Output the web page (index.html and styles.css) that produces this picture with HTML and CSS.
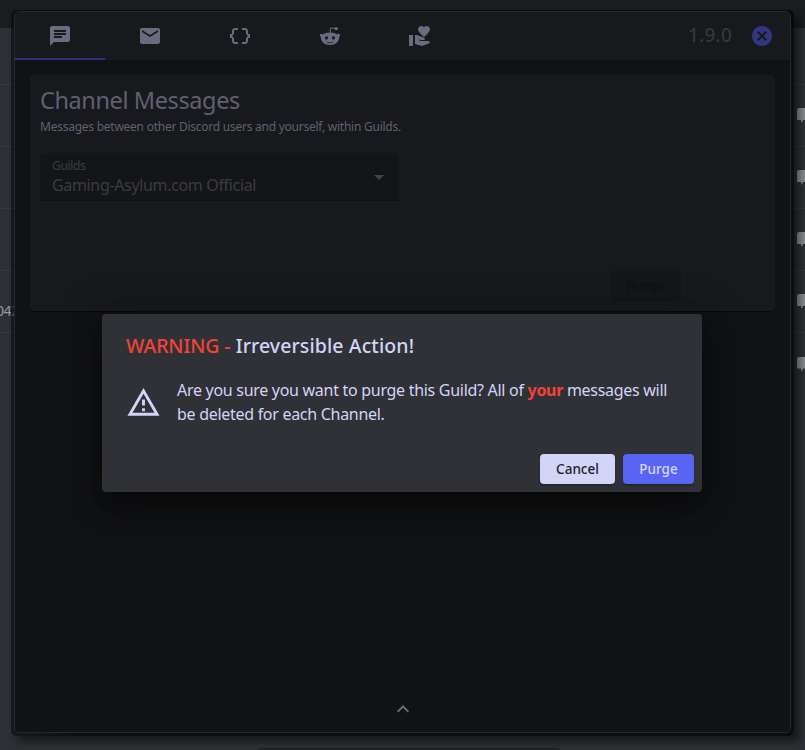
FILE: index.html
```html
<!DOCTYPE html>
<html lang="en">
<head>
<meta charset="utf-8">
<title>Channel Messages</title>
<link rel="stylesheet" href="styles.css">
</head>
<body>
<div class="backdrop">
  <div class="topbar"></div>
  <div class="rows">
    <div class="row first"></div>
    <div class="row"><span></span><i class="bubble"></i></div>
    <div class="row"><span></span><i class="bubble"></i></div>
    <div class="row"><span></span><i class="bubble"></i></div>
    <div class="row"><span>042</span><i class="bubble"></i></div>
    <div class="row last"><span></span><i class="bubble"></i></div>
  </div>
  <div class="composer"></div>
</div>
<main class="window">
  <div class="panel">
    <header class="tabs">
      <div class="tab active"><svg viewBox="0 0 24 24"><path d="M20 2H4c-1.100 0-1.990.9-1.990 2L2 22l4-4h14c1.100 0 2-.9 2-2V4c0-1.100-.9-2-2-2zM6 9h12v2H6V9zm8 5H6v-2h8v2zm4-6H6V6h12v2z"/></svg></div>
      <div class="tab"><svg viewBox="0 0 24 24"><path d="M20 4H4c-1.100 0-1.990.9-1.990 2L2 18c0 1.100.9 2 2 2h16c1.100 0 2-.9 2-2V6c0-1.100-.9-2-2-2zm0 4l-8 5-8-5V6l8 5 8-5v2z"/></svg></div>
      <div class="tab"><svg viewBox="0 0 24 24"><path d="M4 7v2c0 .55-.45 1-1 1H2v4h1c.55 0 1 .45 1 1v2c0 1.650 1.350 3 3 3h3v-2H7c-.55 0-1-.45-1-1v-2c0-1.300-.84-2.420-2-2.830v-.34C5.160 11.420 6 10.300 6 9V7c0-.55.45-1 1-1h3V4H7C5.350 4 4 5.350 4 7zM21 10c-.55 0-1-.45-1-1V7c0-1.650-1.350-3-3-3h-3v2h3c.55 0 1 .45 1 1v2c0 1.300.84 2.420 2 2.830v.34c-1.160.41-2 1.520-2 2.830v2c0 .55-.45 1-1 1h-3v2h3c1.650 0 3-1.350 3-3v-2c0-.55.45-1 1-1h1v-4h-1z"/></svg></div>
      <div class="tab"><svg viewBox="0 0 24 24"><path fill-rule="evenodd" d="M4.600 10.400C6.400 9.200 9 8.400 12 8.400s5.600.8 7.400 2c.5-.5 1-.7 1.500-.6 1.500.2 1.700 2.200.3 3.200 0 4.700-3.700 8-9.200 8s-9.200-3.300-9.200-8c-1.400-1-1.200-3 .3-3.200.5-.1 1 .1 1.500.6zM8.500 12.300a1.600 1.600 0 1 0 0 3.200 1.600 1.600 0 0 0 0-3.200zm7 0a1.600 1.600 0 1 0 0 3.200 1.600 1.600 0 0 0 0-3.200zM8 17.200c2.100 1.600 5.900 1.600 8 0-1.300 2.600-6.700 2.600-8 0z"/><path class="stroke" d="M12.300 9V4l5.200.3"/><circle cx="18.200" cy="4.600" r="1.700"/></svg></div>
      <div class="tab"><svg viewBox="0 0 24 24"><path d="M1 11h4v11H1zM16 3.250C16.650 2.490 17.660 2 18.700 2 20.550 2 22 3.450 22 5.300c0 2.270-2.910 4.900-6 7.700-3.090-2.810-6-5.440-6-7.700C10 3.450 11.450 2 13.300 2c1.040 0 2.050.49 2.700 1.250zM20 17h-7l-2.090-.73.33-.94L13 16h2.820c.65 0 1.180-.53 1.180-1.180 0-.49-.31-.93-.77-1.110L8.970 11H7v9.020L14 22l8.010-3c-.01-1.100-.9-2-2.010-2z"/></svg></div>
      <span class="version">1.9.0</span>
      <svg class="close" viewBox="0 0 24 24"><path d="M12 2C6.470 2 2 6.470 2 12s4.470 10 10 10 10-4.470 10-10S17.530 2 12 2zm5 13.590L15.590 17 12 13.410 8.410 17 7 15.590 10.590 12 7 8.410 8.410 7 12 10.590 15.590 7 17 8.410 13.410 12 17 15.590z"/></svg>
    </header>
    <section class="card">
      <h1>Channel Messages</h1>
      <p class="sub">Messages between other Discord users and yourself, within Guilds.</p>
      <div class="field">
        <div class="label">Guilds</div>
        <div class="value">Gaming-Asylum.com Official</div>
        <i class="arrow"></i>
      </div>
      <div class="card-actions"><button class="btn disabled">Purge</button></div>
    </section>
    <svg class="expand" viewBox="0 0 24 24"><path d="M12 8l-6 6 1.410 1.410L12 10.830l4.590 4.580L18 14z"/></svg>
  </div>
</main>
<div class="dialog">
  <h2><span class="warn">WARNING -</span> <span class="rest">Irreversible Action!</span></h2>
  <div class="message">
    <svg viewBox="0 0 24 24"><path d="M12 5.990L19.530 19H4.470L12 5.990M12 2L1 21h22L12 2zm1 14h-2v2h2v-2zm0-6h-2v4h2v-4z"/></svg>
    <p>Are you sure you want to purge this Guild? All of <b>your</b> messages will<br>be deleted for each Channel.</p>
  </div>
  <div class="actions"><button class="btn cancel">Cancel</button><button class="btn purge">Purge</button></div>
</div>
</body>
</html>
```
FILE: styles.css
```css
* { box-sizing: border-box; }
body { margin: 0; width: 805px; height: 750px; overflow: hidden; position: relative; background: #2e3035; font-family: "Noto Sans", sans-serif; }
h1, h2, p { margin: 0; font-weight: 400; }
svg { display: block; fill: currentColor; }
.topbar { height: 28px; background: #1c1d21; }
.row { height: 62px; display: flex; justify-content: space-between; align-items: center; border-bottom: 1px solid #38393e; color: #9a9ba0; font-size: 14px; }
.row.first { height: 57px; }
.row.last { border: 0; }
.row span { margin-left: -4px; padding-top: 17px; letter-spacing: -.6px; }
.bubble { width: 8px; height: 15px; background: #8f9095; border-radius: 2px 0 0 0; clip-path: polygon(0 0, 100% 0, 100% 80%, 80% 80%, 55% 100%, 50% 80%, 0 80%); }
.composer { position: absolute; left: 257px; right: 245px; bottom: -6px; height: 8px; background: #292a2e; border-radius: 8px; border-top: 1px solid #202125; }
.window { position: absolute; left: 11px; top: 10px; width: 783px; height: 726px; padding: 1px 3px 3px; background: linear-gradient(90deg, rgba(3,4,5,.55), rgba(3,4,5,.8) 10%); border-radius: 5px; box-shadow: 6px 6px 10px rgba(0,0,0,.5); }
.panel { height: 722px; background: #111214; border: 1px solid #27282b; border-radius: 5px; display: flex; flex-direction: column; overflow: hidden; }
.tabs { height: 48px; display: flex; align-items: center; background: #18191c; color: #6b6a80; flex: none; }
.tab { width: 90px; height: 48px; display: flex; align-items: center; justify-content: center; }
.tab svg, .close { width: 24px; height: 24px; }
.tab.active { border-bottom: 2px solid #2d3184; padding-top: 2px; }
.stroke { fill: none; stroke: currentColor; stroke-width: 1; }
.version { margin-left: auto; margin-right: 18px; color: #35363e; font-size: 19px; font-weight: 500; letter-spacing: .2px; position: relative; top: -1px; }
.close { margin-right: 16px; margin-top: -1px; color: #30367f; }
.card { margin: 15px 15px 0; height: 236px; padding: 10px; background: #18191c; border-radius: 4px; box-shadow: 0 1px 1px #0a0b0c; color: #605f72; display: flex; flex-direction: column; flex: none; }
h1 { font-size: 23.5px; line-height: 31px; letter-spacing: -.4px; white-space: nowrap; }
.sub { margin-top: 1px; font-size: 12px; line-height: 20px; letter-spacing: -.25px; white-space: nowrap; }
.field { margin-top: 16px; width: 359px; height: 48px; padding: 3px 12px 0; background: #141517; border-radius: 4px 4px 0 0; border-bottom: 1px dotted #08090a; color: #3b3b44; position: relative; }
.label { font-size: 12px; line-height: 19px; letter-spacing: -.35px; }
.value { font-size: 16px; line-height: 20px; letter-spacing: -.34px; }
.arrow { position: absolute; right: 15px; top: 22px; border: 5px solid transparent; border-top-color: #42424c; border-bottom: 0; }
.card-actions { margin-top: 70px; margin-right: 84px; display: flex; justify-content: flex-end; }
.btn { height: 30px; border: 0; border-radius: 4px; font: 500 13.5px "Noto Sans", sans-serif; padding: 0; }
.disabled { width: 71px; background: #151619; color: #101114; font-weight: 600; }
.expand { width: 24px; height: 24px; margin: auto auto 11px; color: #6b6a80; }
.dialog { position: absolute; left: 102px; top: 314px; width: 600px; height: 178px; padding: 16px 8px 8px 24px; background: #303136; border-radius: 4px; color: #d2d4f8; box-shadow: 0 11px 15px -7px rgba(0,0,0,.2), 0 14px 28px 3px rgba(0,0,0,.24), 0 9px 46px 8px rgba(0,0,0,.2); display: flex; flex-direction: column; }
h2 { font-size: 19.5px; line-height: 32px; font-weight: 500; letter-spacing: .1px; white-space: nowrap; }
.warn { letter-spacing: -.1px; }
.warn, b { color: #f44336; }
.message { margin-top: 16px; display: flex; align-items: center; }
.message svg { width: 35px; height: 35px; flex: none; margin-right: 16px; }
.message p { font-size: 16px; line-height: 24px; letter-spacing: -.29px; white-space: nowrap; }
.actions { margin-top: auto; display: flex; justify-content: flex-end; gap: 8px; }
.actions .btn { box-shadow: 0 2px 2px rgba(0,0,0,.25); }
.cancel { width: 75px; background: #d2d4f8; color: #202125; }
.purge { width: 71px; background: #5865f2; color: #d2d4f8; }
```
